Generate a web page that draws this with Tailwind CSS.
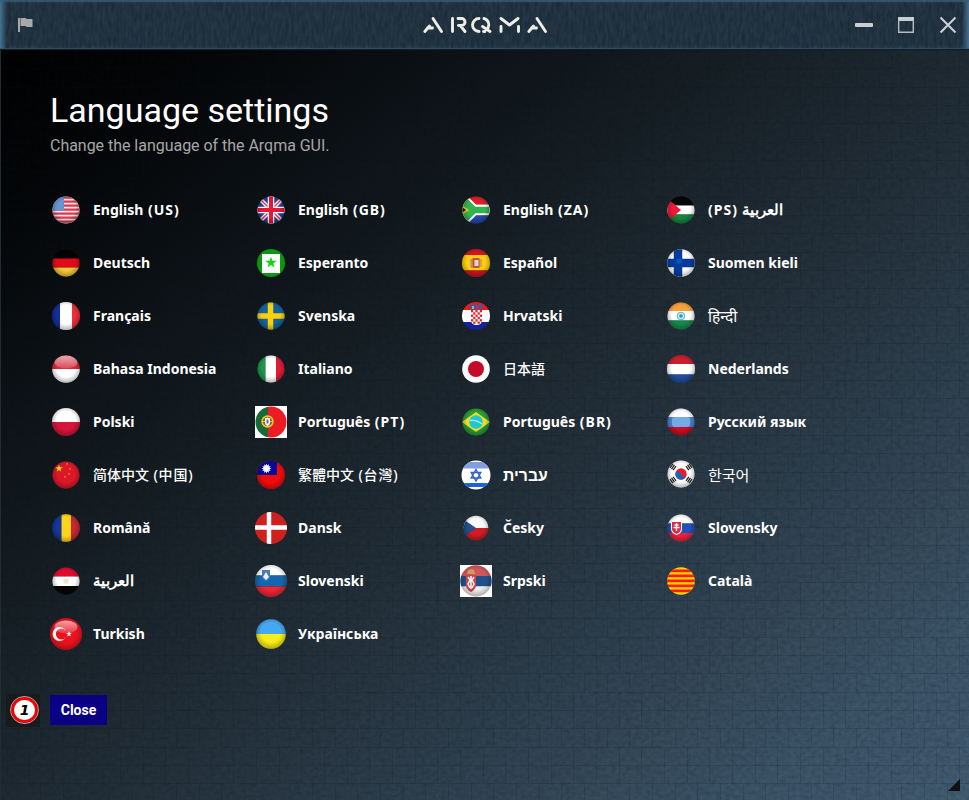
<!DOCTYPE html>
<html lang="en">
<head>
<meta charset="utf-8">
<title>Arqma GUI</title>
<script src="https://cdn.jsdelivr.net/npm/@tailwindcss/browser@4"></script>
</head>
<body class="m-0 overflow-hidden bg-black">
<div class="relative flex h-[800px] w-[969px] flex-col overflow-hidden font-['Noto_Sans','Noto_Sans_CJK_SC',sans-serif] text-white">
  <header class="relative isolate flex h-[50px] shrink-0 items-center justify-between border-b border-[#151b20] bg-[#253745] shadow-[inset_0_0_4px_1px_#34536c]">
    <svg class="absolute inset-0 -z-10 h-full w-full" aria-hidden="true">
      <defs>
        <filter id="fibre" x="0" y="0" width="100%" height="100%" color-interpolation-filters="sRGB"><feTurbulence type="fractalNoise" baseFrequency="0.35 0.09" numOctaves="3" seed="4"/><feColorMatrix values="0 0 0 0 0.08  0 0 0 0 0.13  0 0 0 0 0.18  1.1 0 0 0 -0.28"/></filter>
        <linearGradient id="edgeL"><stop offset="0" stop-color="#46708f"/><stop offset="1" stop-color="#46708f" stop-opacity="0"/></linearGradient>
        <linearGradient id="edgeR"><stop offset="0" stop-color="#46708f" stop-opacity="0"/><stop offset="1" stop-color="#46708f"/></linearGradient>
      </defs>
      <rect width="969" height="49" filter="url(#fibre)"/>
      <rect width="7" height="49" fill="url(#edgeL)"/><rect x="962" width="7" height="49" fill="url(#edgeR)"/>
      <path d="M0 1H969" stroke="#3a5c78" stroke-width="2" opacity=".7"/><path d="M0 48.500H969" stroke="#35536b" opacity=".7"/>
    </svg>
    <svg class="ml-[17px] h-4 w-4" viewBox="0 0 16 16" fill="#a7a8aa"><path d="M1 1h2v14H1z"/><path d="M3.500 1h5l1.500 1h5.500v8H10l-1.500-1h-5z"/></svg>
    <svg class="absolute left-[422px] top-[16px] h-[18px] w-[126px]" viewBox="0 0 126 18" fill="none" stroke="#eeeee6" stroke-width="2.900" stroke-linecap="round" stroke-linejoin="round">
      <path d="M11 2.500L19.500 15.500M2.800 15.500L7.500 10M5.500 12H10.500"/>
      <path d="M30.500 2.500V15.500M36 2.500H39.500A3.500 3.500 0 0 1 39.500 9.500H36.500M39 10.500L43 15.500"/>
      <path d="M57 2.500A6.500 6.500 0 0 0 57 15.500M62 2.500A6.500 6.500 0 0 1 66 12M60.500 10.500L68 15.500M61.500 15.500H63"/>
      <path d="M79 2.500L87.500 9L96 2.500M79 10.500V15.500M96.500 10.500V15.500" />
      <path d="M115 2.500L123.500 15.500M106.800 15.500L111.500 10M109.500 12H114.500"/>
    </svg>
    <div class="flex items-center gap-6 pr-3">
      <svg class="h-[18px] w-[18px]" viewBox="0 0 18 18"><rect y="7" width="18" height="4" rx="1" fill="#c9ced2"/></svg>
      <svg class="h-[18px] w-[18px]" viewBox="0 0 18 18"><path d="M1 1h16v4H1z" fill="#c9ced2"/><path d="M1.700 4v12.300h14.600V4" fill="none" stroke="#b4bcc3" stroke-width="1.400"/></svg>
      <svg class="h-[18px] w-[18px]" viewBox="0 0 18 18"><path d="M1.500 1.500l15 15m0-15l-15 15" stroke="#cdd2dc" stroke-width="2"/></svg>
    </div>
  </header>

  <main class="relative isolate flex flex-1 flex-col border-l border-[#222c34] bg-[linear-gradient(to_bottom_right,#000_0%,#030406_10%,#11181d_31%,#1f2a33_50%,#2e3f4d_70%,#3c5468_88%,#435c72_100%)] pl-[49px] pt-[38px]">
    <svg class="absolute inset-0 -z-10 h-full w-full" aria-hidden="true">
      <defs>
        <pattern id="weave" width="68" height="55" patternUnits="userSpaceOnUse">
          <path d="M0 .5H68M0 18.500H68M0 37.500H68M6.500 0V18M28.500 0V18M51.500 0V18M16.500 18V37M39.500 18V37M62.500 18V37M6.500 37V55M28.500 37V55M51.500 37V55" stroke="#07131b" stroke-opacity=".15" fill="none"/>
          <path d="M8 9H18M32 12H45M19 28H29M44 31H58M8 46H22M54 47H66M14 3V8M36 39V43M58 3V7M23 21V25" stroke="#07131b" stroke-opacity=".11" fill="none"/>
        </pattern>
        <filter id="grain" x="0" y="0" width="100%" height="100%" color-interpolation-filters="sRGB"><feTurbulence type="fractalNoise" baseFrequency="0.2 0.24" numOctaves="3" seed="8"/><feColorMatrix values="0 0 0 0 0.02  0 0 0 0 0.05  0 0 0 0 0.06  .3 0 0 0 -0.09"/></filter>
      </defs>
      <rect width="968" height="750" fill="url(#weave)"/><rect width="968" height="750" filter="url(#grain)"/>
    </svg>
    <h1 class="font-[Roboto,sans-serif] text-[34px] leading-[44px] font-normal whitespace-nowrap">Language settings</h1>
    <p class="mt-[2px] font-[Roboto,sans-serif] text-[16px] leading-[24px] tracking-[-0.03px] text-[#a6a6a6]">Change the language of the Arqma GUI.</p>
    <ul id="languages" class="mt-[25px] grid grid-cols-[repeat(4,205px)] auto-rows-[53px]"></ul>
    <div class="relative mt-[35px] flex">
      <button class="h-[30px] w-[57px] bg-[#090083] font-[Roboto,sans-serif] text-[14px] leading-[30px] font-bold">Close</button>
      <div class="absolute -left-[44px] -top-[1px] flex h-[33px] w-[34px] items-start justify-center bg-[#181a1b] pl-[3px] pt-[3px]">
        <span class="flex h-[26px] w-[27px] items-center justify-center rounded-full border-[3px] border-[#f40000] bg-white font-['DejaVu_Sans',sans-serif] text-[14px] leading-none font-bold text-black italic outline-1 outline-white/60">1</span>
      </div>
    </div>
    <svg class="absolute right-[9px] bottom-[9px] h-3 w-3" viewBox="0 0 12 12"><path d="M12 0V12H0z" fill="#111"/></svg>
  </main>
</div>
<script>
const rect = (x, y, w, h, c) => `<rect x="${x}" y="${y}" width="${w}" height="${h}" fill="${c}"/>`;
const path = (d, c) => `<path d="${d}" fill="${c}"/>`;
const line = (d, c, w) => `<path d="${d}" fill="none" stroke="${c}" stroke-width="${w}"/>`;
const disc = (x, y, r, c) => `<circle cx="${x}" cy="${y}" r="${r}" fill="${c}"/>`;
const rows = (a, b, c, y1 = 11.500, y2 = 20.500) => rect(0, 0, 32, y1, a) + rect(0, y1, 32, y2 - y1, b) + rect(0, y2, 32, 32 - y2, c);
const cols = (a, b, c, x1 = 11, x2 = 21) => rect(0, 0, x1, 32, a) + rect(x1, 0, x2 - x1, 32, b) + rect(x2, 0, 32 - x2, 32, c);
const star = (x, y, r, c, n = 5, k = .4) => {
  let d = '';
  for (let i = 0; i < n * 2; i++) {
    const a = Math.PI * i / n - Math.PI / 2, q = i % 2 ? r * k : r;
    d += (i ? 'L' : 'M') + (x + q * Math.cos(a)).toFixed(2) + ' ' + (y + q * Math.sin(a)).toFixed(2);
  }
  return path(d + 'z', c);
};
let stripes = rect(0, 0, 32, 32, '#f3e5e8');
for (let i = 0; i < 7; i++) stripes += rect(0, 2.500 + i * 4, 32, 2.200, '#d83a50');
let dots = '';
for (let y = 5; y < 17; y += 2) for (let x = 4; x < 14; x += 2) dots += disc(x + (y % 4 === 1 ? 0 : 1), y, .4, '#b9d6f0');
let check = rect(11, 10, 11, 10, '#fff') + path('M11 20h11q0 5-5.500 5T11 20z', '#fff');
for (let i = 0; i < 6; i++) for (let j = 0; j < 5; j++) if ((i + j) % 2 === 0) check += rect(11 + j * 2.200, 10 + i * 2.300, 2.200, 2.300, '#e8202c');
let bars = rect(0, 0, 32, 32, '#ffd400');
for (const y of [4.500, 9.500, 14.500, 19.500, 24.500]) bars += rect(0, y, 32, 2.700, '#f61c10');
const kr = [[8, 9, -55], [24, 9, 55], [8, 22, 55], [24, 22, -55]].map(([x, y, a]) => `<g transform="rotate(${a} ${x} ${y})">${rect(x - 2.500, y - 2.500, 5, 1.200, '#222') + rect(x - 2.500, y - .6, 5, 1.200, '#222') + rect(x - 2.500, y + 1.300, 5, 1.200, '#222')}</g>`).join('');

/* name, artwork, radius, gloss (0 none, 1 shade, 2 shade and highlight), optional centre y and square backing */
const languages = [
  ['English (US)', stripes + rect(0, 0, 14, 16.500, '#5d8fce') + dots, 13.500, 1],
  ['English (GB)', rect(0, 0, 32, 32, '#263f9c') + line('M4 4L28 28M28 4L4 28', '#f4eaf2', 4) + line('M4 4L28 28M28 4L4 28', '#e0364a', 1.300) + line('M16 0V32M0 16H32', '#fff', 6.500) + line('M16 0V32M0 16H32', '#e51735', 4), 13.500, 1],
  ['English (ZA)', rows('#e01d28', '#fff', '#2846ad', 10.500, 21.500) + line('M3 4L15 16L3 28M14 16H30', '#fff', 9) + path('M0 5L10 15.500L0 27z', '#32b34e') + line('M2 4L14 16L2 28M13 16H30', '#32b34e', 6.500) + path('M0 10L9 16L0 22z', '#e9c71c') + path('M0 12L6 16L0 20z', '#111'), 13.500, 1],
  ['(PS) العربية', rows('#050505', '#fff', '#16853c') + path('M2 4L16 16L2 28z', '#ee1937'), 13.500, 1],
  ['Deutsch', rows('#030303', '#e20a18', '#f0c63a', 11.500, 20.500), 13.500, 1],
  ['Esperanto', rect(0, 0, 32, 32, '#09970f') + rect(7, 7, 18, 19, '#fff') + star(16, 15.700, 6, '#0fd516'), 14, 0],
  ['Español', rows('#d41522', '#ffce0c', '#cb1421', 8, 23.500) + rect(10, 12, 12, 8, '#dda13b') + rect(12.500, 11, 7, 10, '#c15338') + rect(14.500, 13, 4, 6, '#ddd5cb') + rect(11, 12, 1, 9, '#999'), 14, 1],
  ['Suomen kieli', rect(0, 0, 32, 32, '#fff') + line('M13 0V32M0 16H32', '#073b99', 8.500) + '<circle cx="14" cy="14" r="2.800" fill="#1264df" opacity=".6"/>', 13.800, 1],
  ['Français', cols('#122f9b', '#fff', '#f12a37', 10, 22), 14, 1],
  ['Svenska', rect(0, 0, 32, 32, '#12639c') + line('M15.500 0V32M0 16H32', '#ffcf08', 5.500), 13.500, 1],
  ['Hrvatski', rows('#f0161c', '#fff', '#15209b', 10, 22) + check + path('M9 6L12 4L14 6L16 3L18 6L21 4L23 6L22 9H10z', '#31629d') + rect(12, 6, 2, 3, '#70b9d8') + rect(16, 6, 2, 3, '#c8314b'), 14, 0],
  ['हिन्दी', rows('#f8a138', '#fff', '#14894b', 11, 20.500) + '<circle cx="16" cy="16" r="3.800" fill="#c7e7ed" stroke="#57b7cf"/>' + disc(16, 16, 1.800, '#2898bd'), 13.500, 1],
  ['Bahasa Indonesia', rows('#d42b3c', '#fff', '#fff', 16, 21), 13.800, 2],
  ['Italiano', cols('#1c984c', '#fff', '#df1c37', 10.500, 21), 13.500, 1],
  ['日本語', rect(0, 0, 32, 32, '#fff') + disc(16, 16, 8, '#c50928'), 13.800, 0],
  ['Nederlands', rows('#c91e2c', '#fff', '#214d9c', 11, 21.500), 14, 1],
  ['Polski', rows('#fff', '#d51439', '#d51439', 16, 21), 14, 1],
  ['Português (PT)', rect(0, 0, 13, 32, '#186a37') + rect(13, 0, 19, 32, '#ed1c24') + '<circle cx="12.500" cy="15.500" r="5.500" fill="#a8571f" stroke="#dfcf30" stroke-width="1.500"/><path d="M7 15.500h11M12.500 10v11" stroke="#dfcf30"/>' + path('M10 12h5v5q0 2-2.500 3Q10 19 10 17z', '#fff') + rect(11.500, 13.500, 2, 4, '#5270aa'), 15.500, 0, 16, '#fff'],
  ['Português (BR)', rect(0, 0, 32, 32, '#279b37') + path('M2 16L16 6L30 16L16 26z', '#f1dd27') + disc(16, 16, 6.800, '#1fc6d4') + line('M10 14.500Q17 13.500 22 18', '#a9f0ed', 1.300), 13.500, 1],
  ['Русский язык', rows('#fff', '#4b80cf', '#cb0d21', 11, 21) + '<rect x="7" y="11" width="18" height="10" rx="3" fill="#8fc6f5" opacity=".6"/>', 13.500, 1],
  ['简体中文 (中国)', rect(0, 0, 32, 32, '#dc1728') + star(9, 9.500, 4, '#ffd91b') + star(17, 5, 1.300, '#ff9c22') + star(20, 10, 1.300, '#ff9c22') + star(19, 15, 1.300, '#ff9c22') + star(15, 18, 1.300, '#ff9c22'), 13.500, 1],
  ['繁體中文 (台灣)', rect(0, 0, 32, 32, '#f00b0b') + rect(0, 0, 22, 16, '#08099b') + star(11.500, 9.500, 5, '#fff', 12, .6), 14, 1],
  ['עברית', rect(0, 0, 32, 32, '#fff') + rect(0, 3, 32, 6.500, '#7f9fe0') + rect(0, 24, 32, 4, '#1863de') + line('M16 10.500L20.800 19H11.200zM16 22L11.200 13.500H20.800z', '#3260c7', 1.400), 14.500, 0],
  ['한국어', rect(0, 0, 32, 32, '#fff') + disc(16, 16, 5.700, '#e81d2c') + path('M10.300 16A2.850 2.850 0 0 1 16 16.500A2.850 2.850 0 0 0 21.700 16A5.700 5.700 0 0 1 10.300 16z', '#1565bb') + kr, 13.500, 1, 15],
  ['Română', cols('#12389b', '#ffd51b', '#c92630', 11.500, 21), 13.800, 1],
  ['Dansk', rect(0, 0, 32, 32, '#cf2020') + line('M14 0V32M0 15.500H32', '#fff', 4.500), 16, 0],
  ['Česky', rect(0, 0, 32, 16, '#f8f8f8') + rect(0, 16, 32, 16, '#d01b23') + path('M3 7L16 16L3 26z', '#204f8a'), 12.300, 1],
  ['Slovensky', rows('#fff', '#2050b9', '#ee203c', 11.500, 21) + path('M6 9.500H17V17Q17 21 11.500 23Q6 21 6 17z', '#fff') + path('M7 10H16V17Q16 20 11.500 22Q7 20 7 17z', '#dd2944') + line('M11.500 11V19M9.500 13H13.500M8.500 15.500H14.500', '#fff', 1.300), 13.500, 1],
  ['العربية', rows('#e00b2d', '#fff', '#050505', 11.500, 21) + rect(13.500, 14, 5, 4.500, '#f0e6c4'), 13.500, 1],
  ['Slovenski', rows('#fff', '#1665ae', '#ee2635', 10.500, 21.500) + path('M7 5H15V11Q15 15 11 16Q7 15 7 11z', '#447eb0') + path('M8 12L11 7L14 12L11 15z', '#e6f1f7'), 16, 1],
  ['Srpski', rows('#d0565d', '#20508b', '#eee', 11, 21.500) + path('M6 10H16V21Q15 25 11 27Q7 25 6 21z', '#ca444b') + line('M8 12L10 15L8 19L10 23M14 12L12 15L14 19L12 23M11 11V24', '#eee', 1.600) + path('M7 9L8 5L11 4L14 5L15 9z', '#c9a05b'), 15.700, 1, 16, '#fff'],
  ['Català', bars, 13.800, 0],
  ['Turkish', rect(0, 0, 32, 32, '#e9121d') + disc(9.500, 16, 7, '#fff') + disc(11.500, 16, 5.600, '#e9121d') + star(19, 16, 3, '#fff'), 16, 2],
  ['Українська', rect(0, 0, 32, 16, '#45a9f2') + rect(0, 16, 32, 16, '#f8ed18'), 14.700, 1],
];
const face = name =>
  /[\u0900-\u097f]/.test(name) ? 'text-[15.500px] font-normal'
  : /[\uac00-\ud7af]/.test(name) ? "font-['Noto_Sans_CJK_KR',sans-serif] text-[15px] font-normal"
  : /[\u3040-\u9fff]/.test(name) ? 'text-[14px] font-medium'
  : /[\u0590-\u05ff]/.test(name) ? 'text-[15.800px] font-bold'
  : 'text-[14px] font-bold';
const label = name => name
  .replace(/\s?\([^)]*\)/, m => `<span class="${/[\u3040-\u9fff]/.test(m) ? 'tracking-[0.8px]' : 'tracking-[1px]'}">${m}</span>`)
  .replace(/[\u0600-\u06ff]+/, m => `<span class="text-[15px] font-semibold">${m}</span>`);
document.getElementById('languages').innerHTML = languages.map(([name, art, r, gloss, cy = 16, backing], i) => `
  <li class="flex h-[53px] items-center gap-[11px]">
    <svg class="h-8 w-8 shrink-0" viewBox="0 0 32 32" aria-hidden="true">
      <defs><clipPath id="c${i}"><circle cx="16" cy="${cy}" r="${r}"/></clipPath>
      <radialGradient id="s${i}" cx=".5" cy=".45" r=".56"><stop offset=".6" stop-color="#000" stop-opacity="0"/><stop offset="1" stop-color="#000" stop-opacity=".3"/></radialGradient>
      <linearGradient id="g${i}" x2="0" y2="1"><stop stop-color="#fff" stop-opacity=".6"/><stop offset="1" stop-color="#fff" stop-opacity=".15"/></linearGradient></defs>
      ${backing ? rect(0, 0, 32, 32, backing) : ''}
      <g clip-path="url(#c${i})"><g transform="translate(0 ${cy - 16})">${art}</g>
      ${gloss ? `<circle cx="16" cy="${cy}" r="${r}" fill="url(#s${i})"/>` : ''}
      ${gloss === 2 ? `<ellipse cx="16" cy="9" rx="11.500" ry="6.500" fill="url(#g${i})"/>` : ''}</g>
    </svg>
    <span dir="ltr" class="${face(name)} leading-5 whitespace-nowrap">${label(name)}</span>
  </li>`).join('');
</script>
</body>
</html>
